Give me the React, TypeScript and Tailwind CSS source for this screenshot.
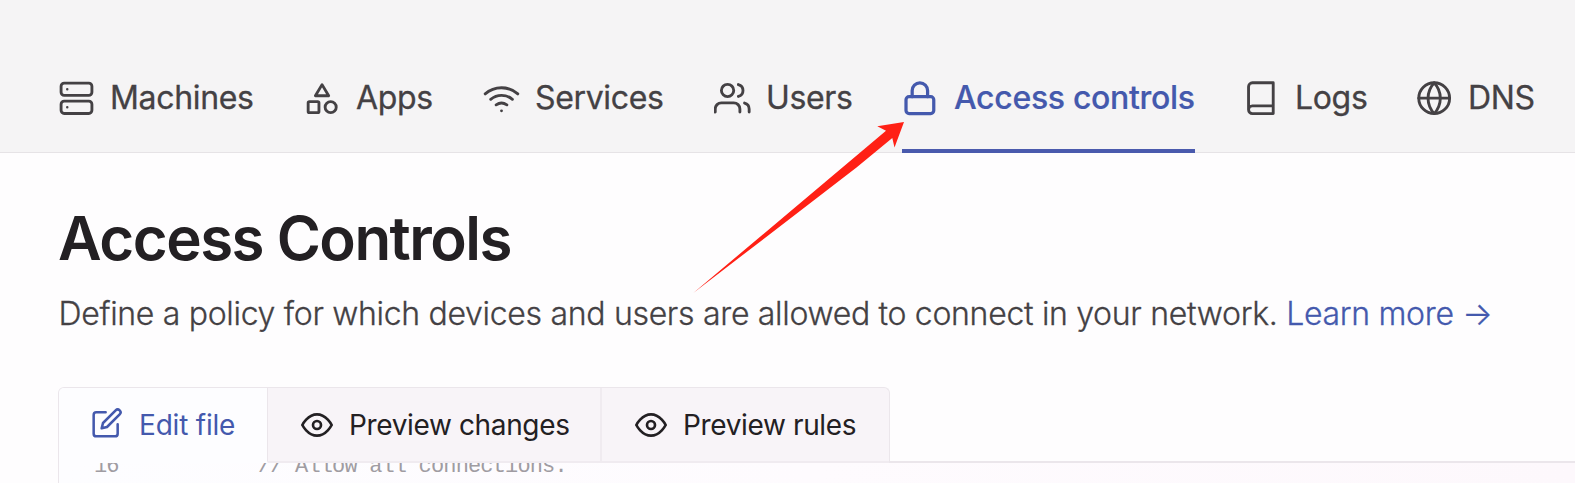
import type { ReactNode } from "react";

function Icon({ className, stroke = 1.85, children }: { className: string; stroke?: number; children: ReactNode }) {
  return (
    <svg
      viewBox="0 0 24 24"
      fill="none"
      stroke="currentColor"
      strokeWidth={stroke}
      strokeLinecap="round"
      strokeLinejoin="round"
      className={`shrink-0 ${className}`}
      aria-hidden="true"
    >
      {children}
    </svg>
  );
}

const Eye = () => (
  <Icon className="size-8" stroke={2}>
    <path d="M1 12s4-8 11-8 11 8 11 8-4 8-11 8-11-8-11-8z" />
    <circle cx="12" cy="12" r="3" />
  </Icon>
);

const navItems: { label: string; width: string; active?: boolean; icon: ReactNode }[] = [
  {
    label: "Machines",
    width: "w-[246px]",
    icon: (
      <>
        <rect x="2" y="2" width="20" height="8" rx="2" />
        <rect x="2" y="13.7" width="20" height="8" rx="2" />
        <path d="M6 6h.01M6 17.7h.01" strokeWidth="1.6" />
      </>
    ),
  },
  {
    label: "Apps",
    width: "w-[179px]",
    icon: (
      <>
        <path d="M11.7 3 16 10.2H7.4z" />
        <rect x="2.7" y="14" width="7" height="7.2" rx="0.8" />
        <circle cx="17.3" cy="17.6" r="3.6" />
      </>
    ),
  },
  {
    label: "Services",
    width: "w-[231px]",
    icon: (
      <path d="M5 12.55a11 11 0 0 1 14.08 0M1.42 9a16 16 0 0 1 21.16 0M8.53 16.11a6 6 0 0 1 6.95 0M12 20h.01" />
    ),
  },
  {
    label: "Users",
    width: "w-[188px]",
    icon: (
      <g transform="translate(-0.2 -0.2)">
        <path d="M17 21v-2a4 4 0 0 0-4-4H5a4 4 0 0 0-4 4v2" />
        <circle cx="9" cy="7" r="4" />
        <path d="M23 21v-2a4 4 0 0 0-3-3.87M16 3.13a4 4 0 0 1 0 7.75" />
      </g>
    ),
  },
  {
    label: "Access controls",
    width: "w-[341px]",
    active: true,
    icon: (
      <>
        <rect x="2.6" y="10.8" width="18" height="11" rx="2" />
        <path d="M6.6 10.8v-4a5 5 0 0 1 10 0v4" />
      </>
    ),
  },
  {
    label: "Logs",
    width: "w-[173px]",
    icon: (
      <g transform="translate(-0.4 -0.2)">
        <path d="M4 19.5A2.5 2.5 0 0 1 6.5 17H20M6.5 2H20v20H6.5A2.5 2.5 0 0 1 4 19.5v-15A2.5 2.5 0 0 1 6.5 2z" />
      </g>
    ),
  },
  {
    label: "DNS",
    width: "w-[130px]",
    icon: (
      <g transform="translate(-0.2 -0.2)">
        <circle cx="12" cy="12" r="10" />
        <path d="M2 12h20M12 2a15.3 15.3 0 0 1 4 10 15.3 15.3 0 0 1-4 10 15.3 15.3 0 0 1-4-10 15.3 15.3 0 0 1 4-10z" />
      </g>
    ),
  },
];

export default function App() {
  return (
    <div className="relative h-[483px] w-[1575px] overflow-hidden bg-[#fefdfe] font-['Inter',sans-serif] text-[#232023]">
      <header className="flex h-[153px] items-end border-b border-[#e6e3e6] bg-[#f5f4f5] pl-[58px]">
        {navItems.map((item) => (
          <div key={item.label} className={`shrink-0 ${item.width}`}>
            <a
              className={
                item.active
                  ? "-mb-px flex h-[73px] w-[293px] items-start gap-[15px] border-b-4 border-[#4a5aad] text-[#4459ad]"
                  : "flex h-[72px] items-start gap-[15px] text-[#444144]"
              }
            >
              <Icon className="size-[37px]" stroke={item.active ? 2.1 : 1.85}>
                {item.icon}
              </Icon>
              <span
                className={
                  item.active
                    ? "text-[32px] leading-[35px] font-medium tracking-[-0.32px] whitespace-nowrap [-webkit-text-stroke:0.2px]"
                    : "text-[32px] leading-[35px] tracking-[-0.34px] whitespace-nowrap [-webkit-text-stroke:0.3px]"
                }
              >
                {item.label}
              </span>
            </a>
          </div>
        ))}
      </header>

      <main className="pl-[59px]">
        <h1 className="-ml-px pt-[49px] text-[60px] leading-[72px] font-semibold tracking-[-1.5px] whitespace-nowrap">
          Access Controls
        </h1>
        <p className="-ml-[0.5px] pt-[19px] text-[32px] leading-[42px] font-light tracking-[-0.31px] whitespace-nowrap text-[#444144] [-webkit-text-stroke:0.3px]">
          Define a policy for which devices and users are allowed to connect in your network.{" "}
          <a className="text-[#4459ad]">Learn more →</a>
        </p>

        <div className="relative z-10 mt-[52px] -ml-px flex h-[76px] w-[832px] overflow-hidden rounded-t-md border border-b-0 border-[#ebe6eb] bg-[#f8f4f8] text-[28px] tracking-[-0.36px]">
          <div className="flex w-[209px] items-center gap-[16px] border-r border-b-2 border-r-[#ebe6eb] border-b-[#fdfdff] bg-[#fdfdff] pl-[32px] tracking-[-0.2px] text-[#4459ad]">
            <Icon className="mb-[3px] size-8" stroke={1.9}>
              <path d="M11 4H4a2 2 0 0 0-2 2v14a2 2 0 0 0 2 2h14a2 2 0 0 0 2-2v-7" />
              <path d="M18.5 2.5a2.121 2.121 0 0 1 3 3L12 15l-4 1 1-4 9.5-9.5z" />
            </Icon>
            <span className="whitespace-nowrap">Edit file</span>
          </div>
          <div className="flex w-[334px] items-center gap-[16px] border-r-2 border-b-2 border-[#f0ebf0] pl-[33px]">
            <Eye />
            <span className="whitespace-nowrap">Preview changes</span>
          </div>
          <div className="flex flex-1 items-center gap-[16px] border-b-2 border-[#f0ebf0] pl-[33px]">
            <Eye />
            <span className="whitespace-nowrap">Preview rules</span>
          </div>
        </div>

        <div className="-mt-[2px] -ml-px h-[22px] overflow-hidden border-t-2 border-l border-[#ebe6eb] bg-linear-to-r from-[#fdfdff] via-[#fefbfe] to-[#fdf8fc]">
          <div className="-mt-[8px] flex font-['Liberation_Mono',monospace] text-[22px] leading-[24px] tracking-[-0.85px] whitespace-pre text-[#a09ca2]">
            <span className="w-[199px] pl-[35px]">16</span>
            <span>{"// Allow all connections."}</span>
          </div>
        </div>
      </main>

      <svg
        className="pointer-events-none absolute top-0 left-0 z-20"
        width="1575"
        height="483"
        viewBox="0 0 1575 483"
        aria-hidden="true"
      >
        <path d="M693.3 293 L886 130.7 L877.3 126.3 L904 122 L894.5 147.5 L892.3 137.9 L856.5 167.5 Z" fill="#ff2015" />
      </svg>
    </div>
  );
}
